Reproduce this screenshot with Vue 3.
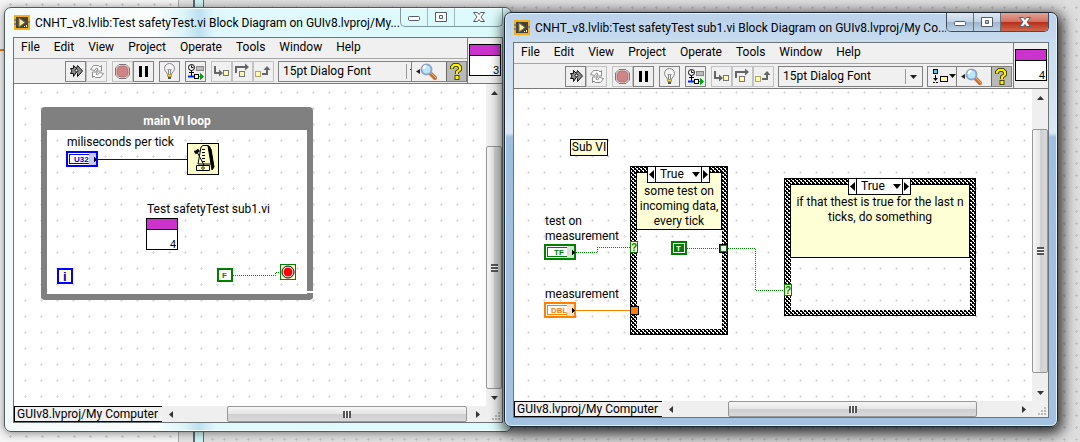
<script setup>
const menus = ['File', 'Edit', 'View', 'Project', 'Operate', 'Tools', 'Window', 'Help']

const groups = [
  [['run', 'Run', true], ['loop', 'Run continuously', false]],
  [['abort', 'Abort', false], ['pause', 'Pause', true]],
  [['bulb', 'Highlight execution', true]],
  [['retain', 'Retain wire values', true]],
  [['into', 'Step into', false], ['over', 'Step over', false], ['out', 'Step out', false]],
]

const windows = [
  {
    id: 'main',
    title: 'CNHT_v8.lvlib:Test safetyTest.vi Block Diagram on GUIv8.lvproj/My...',
    number: 3,
    vbar: [45, 243, 0],
    hbar: [48, 240, 2],
  },
  {
    id: 'sub',
    title: 'CNHT_v8.lvlib:Test safetyTest sub1.vi Block Diagram on GUIv8.lvproj/My Co...',
    number: 4,
    vbar: [23, 244, 11],
    hbar: [49, 249, 38],
  },
]

const tracks = (bar) => `17px ${bar.map((n) => `minmax(0, ${n}fr)`).join(' ')} 17px`
</script>

<template>
  <main class="desktop">
    <svg class="backdrop" aria-hidden="true">
      <defs>
        <pattern id="dots16" width="16" height="16" x="9" y="3" patternUnits="userSpaceOnUse">
          <path d="M0 1h3v1H0zM1 0h1v3H1z" fill="#cfcfcf" />
        </pattern>
        <pattern id="dots12" width="12" height="12" x="7" y="6" patternUnits="userSpaceOnUse">
          <path d="M0 1h3v1H0zM1 0h1v3H1z" fill="#c4c4c4" />
        </pattern>
      </defs>
      <rect width="178" height="100%" fill="#f4f4f4" />
      <rect width="178" height="100%" fill="url(#dots16)" />
      <rect x="178" width="15" height="100%" fill="#e2e2e2" />
      <rect x="178" width="1" height="100%" fill="#a8a8a8" />
      <rect x="193" width="11" height="100%" fill="#cdf3f4" />
      <rect x="193" width="2" height="100%" fill="#5d686c" />
      <rect x="203" width="1" height="100%" fill="#5d686c" />
      <rect x="204" width="100%" height="100%" fill="#dedede" />
      <rect x="204" width="100%" height="100%" fill="url(#dots12)" />
      <rect y="49" width="5" height="2" fill="#f57c00" />
    </svg>

    <section v-for="w in windows" :key="w.id" class="window" :class="w.id">
      <header class="titlebar">
        <svg class="app-icon" width="16" height="15" viewBox="0 0 16 15">
          <rect x="1" y="1" width="14" height="13" fill="#474238" stroke="#f2b118" stroke-width="2" />
          <path d="M0 5h4M0 9h4M11 7h5" stroke="#38579b" />
          <path d="M5 3l6 4.500-6 4.500z" fill="#f9edae" stroke="#8d7b39" />
          <path d="M10 11h1v1h-1zM12 10h1v2h-1z" fill="#fff" />
        </svg>
        <h1>{{ w.title }}</h1>
        <div class="caption">
          <button aria-label="Minimize">
            <svg width="14" height="14" viewBox="0 0 14 14"><rect x="1.500" y="6.500" width="11" height="4" rx="1" fill="#fff" stroke="#555d6b" /></svg>
          </button>
          <button aria-label="Maximize">
            <svg width="14" height="14" viewBox="0 0 14 14"><path d="M1.500 2.500h11v9h-11zM5.500 5.500v3h3v-3z" fill="#fff" fill-rule="evenodd" stroke="#555d6b" /></svg>
          </button>
          <button class="close" aria-label="Close">
            <svg width="14" height="14" viewBox="0 0 14 14"><path d="M1.500 2.500h4L7 4.500l1.500-2h4L9 7l3.500 4.500h-4L7 9.500l-1.500 2h-4L5 7z" fill="#fff" stroke="#555d6b" /></svg>
          </button>
        </div>
      </header>

      <div class="client">
        <div class="head">
          <div class="bars">
            <nav class="menu">
              <button v-for="m in menus" :key="m">{{ m }}</button>
            </nav>
            <div class="toolbar">
              <div v-for="(g, i) in groups" :key="i" class="group">
                <button v-for="[name, label, on] in g" :key="name" :aria-label="label" :class="{ on }">
                  <svg width="21" height="21" viewBox="0 0 21 21">
                    <g v-if="name === 'run'" stroke="#111" fill="#909090">
                      <path d="M5.500 7.500h3v-3l3 3-1.500 2 1.500 1.500-3 4.500v-3h-3l1.500-2.500z" />
                      <path d="M12.500 4.500l5 5.500-5 5.500v-3l-1-1 1.500-2-1.500-2z" />
                    </g>
                    <g v-else-if="name === 'loop'" fill="#fff" stroke="#8c8c8c">
                      <path d="M4.500 8.500l3-4h5l1.500 1.500 1.500-1.500v5.500h-5l1.500-2-1.500-1-2 2.500z" />
                      <path d="M17.500 12.500l-3 4h-5L8 15l-1.500 1.500V11h5L10 13l1.500 1 2-2.500z" />
                    </g>
                    <g v-else-if="name === 'abort'">
                      <path d="M7 3.500h7L17.500 7v7L14 17.500H7L3.500 14V7z" fill="#fff" stroke="#777" />
                      <path d="M7.500 5h6L16 7.500v6L13.500 16h-6L5 13.500v-6z" fill="#cf8585" stroke="#a96a6a" />
                    </g>
                    <path v-else-if="name === 'pause'" d="M6 5h3v11H6zM12 5h3v11h-3z" fill="#000" />
                    <g v-else-if="name === 'bulb'" stroke="#858585">
                      <path d="M8.500 13.500c0-2-3-3-3-6a5 5 0 0 1 10 0c0 3-3 4-3 6z" fill="#f3f3f3" />
                      <path d="M8.500 8l1 1 1-1 1 1 1-1M9.500 9v4M11.500 9v4" fill="none" />
                      <path d="M8.500 13.500h4v2h-4z" fill="#f2d34e" stroke="#b89a35" />
                      <path d="M9 17h3" stroke="#555" stroke-width="2" />
                    </g>
                    <g v-else-if="name === 'retain'" fill="none">
                      <circle cx="6.500" cy="6.500" r="3" fill="#fff" stroke="#000" />
                      <path d="M6.500 4.500v2h2M6.500 9.500v6M4 11.500h5" stroke="#000" />
                      <rect x="11.500" y="5.500" width="7" height="4" fill="#bbb" stroke="#888" />
                      <path d="M3 15.500h6" stroke="#0026ff" stroke-width="2" />
                      <rect x="9.500" y="13.500" width="4" height="4" fill="#fff" stroke="#000" />
                      <path d="M14 15.500h4M15.500 12.500l3 3-3 3z" stroke="#00a614" fill="#00a614" />
                    </g>
                    <g v-else-if="name === 'into'" fill="none">
                      <path d="M4 5v7h5" stroke="#666" stroke-width="2" />
                      <path d="M8 8.500l4 3.500-4 3.500z" fill="#666" />
                      <rect x="12.500" y="9.500" width="5" height="5" fill="#fffcae" stroke="#777" />
                    </g>
                    <g v-else-if="name === 'over'" fill="none">
                      <path d="M4 12V6h9" stroke="#666" stroke-width="2" />
                      <path d="M13 2.500l4 3.500-4 3.500z" fill="#666" />
                      <rect x="7.500" y="10.500" width="5" height="5" fill="#fffcae" stroke="#777" />
                    </g>
                    <g v-else fill="none">
                      <path d="M9 13h5V8" stroke="#666" stroke-width="2" />
                      <path d="M10.500 9L14 5l3.500 4z" fill="#666" />
                      <rect x="2.500" y="10.500" width="5" height="5" fill="#fffcae" stroke="#aaa86b" />
                    </g>
                  </svg>
                </button>
              </div>
              <div class="font">
                <select aria-label="Font"><option>15pt Dialog Font</option></select>
                <svg v-if="w.id === 'sub'" width="17" height="17" viewBox="0 0 17 17"><path d="M.5 1v15" stroke="#999" /><path d="M5 7h7l-3.500 4z" fill="#222" /></svg>
                <svg v-else width="5" height="17" viewBox="0 0 5 17"><path d="M.5 1v15" stroke="#999" /><path d="M4 6h1v1H4z" fill="#222" /></svg>
              </div>
              <div class="tools">
                <button v-if="w.id === 'sub'" class="reorder" aria-label="Reorder">
                  <svg width="28" height="19" viewBox="0 0 28 19">
                    <rect x="5.500" y="2.500" width="4" height="4" fill="#5ed0f3" stroke="#000" />
                    <path d="M7.500 8v3" stroke="#000" />
                    <path d="M5 11h5l-2.500 3z" fill="#000" />
                    <path d="M5 15.500h6" stroke="#000" stroke-dasharray="2 1" />
                    <rect x="12.500" y="9.500" width="7" height="5" fill="#fff9a4" stroke="#000" />
                    <path d="M21 7h7l-3.500 4z" fill="#111" />
                  </svg>
                </button>
                <button class="find" aria-label="Search">
                  <svg width="24" height="19" viewBox="0 0 24 19">
                    <path d="M1 9.500L5 7v5z" fill="#222" />
                    <path d="M15 11l5 5" stroke="#c5703a" stroke-width="4" stroke-linecap="round" />
                    <path d="M16 11l5 5" stroke="#f1b56d" />
                    <circle cx="11.500" cy="7.500" r="5" fill="#b9e7fa" stroke="#91a6c6" stroke-width="2" />
                    <path d="M8.500 7a3 3 0 0 1 3-3" fill="none" stroke="#fff" stroke-width="2" />
                  </svg>
                </button>
                <button class="help" aria-label="Context help">
                  <svg width="18" height="19" viewBox="0 0 18 19">
                    <path d="M5 7V5l2-2h4l2 2v2.500l-3 2.500v2" fill="none" stroke="#4a4a00" stroke-width="4" />
                    <path d="M7.500 13h5v5h-5z" fill="#4a4a00" />
                    <path d="M5 6.500V5l2-2h4l2 2v2.500l-3 2.500v2" fill="none" stroke="#fff200" stroke-width="2" />
                    <path d="M8.500 14h3v3h-3z" fill="#fff200" />
                  </svg>
                </button>
              </div>
            </div>
          </div>
          <div class="corner"><div class="vi-icon">{{ w.number }}</div></div>
        </div>

        <div class="work">
          <div v-if="w.id === 'main'" class="canvas">
            <svg class="sheet" shape-rendering="crispEdges">
              <defs>
                <pattern id="gridMain" width="16" height="16" x="10" y="7" patternUnits="userSpaceOnUse">
                  <path d="M0 1h3v1H0zM1 0h1v3H1z" fill="#dedede" />
                </pattern>
              </defs>
              <rect width="100%" height="100%" fill="url(#gridMain)" />
            </svg>
            <div class="loop"><h2>main VI loop</h2></div>
            <span class="label tick">miliseconds per tick</span>
            <span class="label call">Test safetyTest sub1.vi</span>
            <div class="vi-icon node">4</div>
            <svg class="sheet" shape-rendering="crispEdges">
              <g transform="translate(-14 -84)">
                <path d="M305 290.500h8v2h-8z" fill="#fff" />
                <path d="M98 159.500h89" stroke="#0000e0" />
                <rect x="67" y="152" width="30" height="14" fill="#fff" stroke="#0000ff" stroke-width="2" />
                <rect x="69.500" y="154.500" width="24" height="9" fill="#fff" stroke="#0000ff" />
                <rect x="89" y="153" width="7" height="12" fill="#c8c8fa" />
                <path d="M94 156.500v6l3-3z" fill="#000" />
                <text x="74" y="162" class="glyph blue">U32</text>
                <rect x="187.500" y="143.500" width="31" height="31" fill="#ffffcc" stroke="#000" />
                <g shape-rendering="auto" fill="none" stroke="#000">
                  <path d="M198 164l3-17 2-1.500h5l2 1.500 3 17z" fill="#ffffcc" />
                  <path d="M208 146l3 3 3 18-2 3z" fill="#000" />
                  <path d="M203.500 149v13" stroke-width="3" stroke-dasharray="1 2" />
                  <path d="M196 150l8 15M194 151l4 2" />
                  <path d="M195 153l4-3" stroke-width="3" />
                  <path d="M196.500 165.500h13v5h-13z" fill="#ffffcc" />
                  <path d="M203 166.500l1.500 1.500-1.500 1.500-1.500-1.500z" />
                </g>
                <rect x="58" y="269" width="14" height="14" fill="#ffffcc" stroke="#0000ff" stroke-width="2" />
                <text x="63" y="281" class="glyph index blue">i</text>
                <path d="M233 275.500h42v-3h5" fill="none" stroke="#008000" stroke-dasharray="1 1" />
                <rect x="218" y="269" width="14" height="12" fill="#fff" stroke="#008000" stroke-width="2" />
                <text x="222" y="278" class="glyph green">F</text>
                <rect x="280.500" y="264.500" width="15" height="15" fill="#ffffcc" stroke="#008000" />
                <g shape-rendering="auto">
                  <circle cx="288" cy="272" r="6" fill="#fff" stroke="#000" />
                  <circle cx="288" cy="272" r="4.500" fill="#f00" />
                </g>
              </g>
            </svg>
          </div>

          <div v-else class="canvas">
            <svg class="sheet" shape-rendering="crispEdges">
              <defs>
                <pattern id="gridSub" width="16" height="16" x="13" y="2" patternUnits="userSpaceOnUse">
                  <path d="M0 1h3v1H0zM1 0h1v3H1z" fill="#dedede" />
                </pattern>
                <pattern id="weave" width="4" height="4" patternUnits="userSpaceOnUse">
                  <rect width="4" height="4" fill="#000" />
                  <path d="M0 0h2v1H0zM1 1h1v1H1zM2 2h2v1H2zM3 3h1v1H3z" fill="#fff" />
                </pattern>
              </defs>
              <rect width="100%" height="100%" fill="url(#gridSub)" />
              <g transform="translate(-514 -89)" fill="none">
                <path d="M633.500 169.500h91v162h-91zM787.500 181.500h185v131h-185z" stroke="url(#weave)" stroke-width="6" />
                <path d="M630.500 166.500h97v168h-97zM784.500 178.500h191v137h-191z" stroke="#000" />
              </g>
            </svg>
            <span class="note free">Sub VI</span>
            <p class="note first">some test on incoming data, every tick</p>
            <p class="note second">if that thest is true for the last n ticks, do something</p>
            <div v-for="c in ['one', 'two']" :key="c" class="case" :class="c">
              <button aria-label="Previous case"><svg width="7" height="9" viewBox="0 0 7 9"><path d="M6 0v9L1 4.500z" /></svg></button>
              <select aria-label="Case"><option>True</option></select>
              <svg class="drop" width="8" height="5" viewBox="0 0 8 5"><path d="M0 0h8L4 5z" /></svg>
              <button aria-label="Next case"><svg width="7" height="9" viewBox="0 0 7 9"><path d="M1 0v9l5-4.500z" /></svg></button>
            </div>
            <span class="label bool">test on<br>measurement</span>
            <span class="label dbl">measurement</span>
            <svg class="sheet" shape-rendering="crispEdges">
              <g transform="translate(-514 -89)">
                <path d="M576 252.500h21v-5h33M687 248.500h32M728 248.500h27.500v42H784" fill="none" stroke="#008000" stroke-dasharray="1 1" />
                <path d="M576 310.500h54" stroke="#ff8000" />
                <rect x="545" y="245" width="30" height="14" fill="#fff" stroke="#008000" stroke-width="2" />
                <rect x="547.500" y="247.500" width="24" height="9" fill="#fff" stroke="#008000" />
                <rect x="567" y="246" width="7" height="12" fill="#cfe5cf" />
                <path d="M572 249.500v6l3-3z" />
                <text x="554" y="255" class="glyph green">TF</text>
                <rect x="545" y="303" width="30" height="14" fill="#fff" stroke="#ff8000" stroke-width="2" />
                <rect x="547.500" y="305.500" width="24" height="9" fill="#fff" stroke="#ff8000" />
                <rect x="567" y="304" width="7" height="12" fill="#ffe5cc" />
                <path d="M572 307.500v6l3-3z" />
                <text x="551" y="313" class="glyph orange">DBL</text>
                <rect x="630.500" y="241.500" width="7" height="11" fill="#ffffcc" stroke="#008000" />
                <text x="631" y="251" class="glyph mark">?</text>
                <rect x="784.500" y="284.500" width="7" height="11" fill="#ffffcc" stroke="#008000" />
                <text x="785" y="294" class="glyph mark">?</text>
                <rect x="630.500" y="306.500" width="8" height="8" fill="#ff8000" stroke="#000" />
                <rect x="719.500" y="244.500" width="8" height="8" fill="#fff" stroke="#000" />
                <rect x="720.500" y="245.500" width="6" height="6" fill="#fff" stroke="#008000" />
                <rect x="672" y="242" width="14" height="12" fill="#fff" stroke="#008000" stroke-width="2" />
                <rect x="674" y="244" width="10" height="8" fill="#008000" />
                <text x="676" y="251" class="glyph white">T</text>
              </g>
            </svg>
          </div>

          <div class="scroll vertical" :style="{ gridTemplateRows: tracks(w.vbar) }">
            <button aria-label="Scroll up"><svg width="7" height="4" viewBox="0 0 7 4"><path d="M0 4h7L3.500 0z" fill="#333" /></svg></button>
            <i /><div class="thumb"><b /></div><i />
            <button aria-label="Scroll down"><svg width="7" height="4" viewBox="0 0 7 4"><path d="M0 0h7L3.500 4z" fill="#333" /></svg></button>
          </div>
        </div>

        <footer class="foot">
          <span class="target">GUIv8.lvproj/My Computer</span>
          <div class="scroll horizontal" :style="{ gridTemplateColumns: tracks(w.hbar) }">
            <button aria-label="Scroll left"><svg width="4" height="7" viewBox="0 0 4 7"><path d="M4 0v7L0 3.500z" fill="#333" /></svg></button>
            <i /><div class="thumb"><b /></div><i />
            <button aria-label="Scroll right"><svg width="4" height="7" viewBox="0 0 4 7"><path d="M0 0v7l4-3.500z" fill="#333" /></svg></button>
          </div>
          <svg class="grip" width="16" height="16" viewBox="0 0 16 16"><path d="M12 6h2v2h-2zM9 9h2v2H9zM12 9h2v2h-2zM6 12h2v2H6zM9 12h2v2H9zM12 12h2v2h-2z" fill="#bbb" /></svg>
        </footer>
      </div>
    </section>
  </main>
</template>

<style>
body {
  margin: 0;
  overflow: hidden;
}
</style>

<style scoped>
* {
  box-sizing: border-box;
}
.desktop {
  position: relative;
  height: 100vh;
  overflow: hidden;
  background: #dedede;
  color: #000;
  font-family: Roboto, "Open Sans", "Noto Sans", sans-serif;
  font-size: 12px;
  line-height: 15px;
}
button,
select {
  margin: 0;
  padding: 0;
  border: 0;
  border-radius: 0;
  background: none;
  color: inherit;
  font: inherit;
  appearance: none;
}
svg {
  display: block;
}
.backdrop,
.sheet {
  position: absolute;
  inset: 0;
  width: 100%;
  height: 100%;
  pointer-events: none;
}
.window {
  position: absolute;
  display: flex;
  flex-direction: column;
  padding: 0 8px 8px;
  border: 1px solid #4e5a5e;
  border-radius: 7px;
}
.main {
  left: 4px;
  right: 568px;
  top: 7px;
  bottom: 10px;
  background: linear-gradient(90deg, #f5f8f8 0, #fbfdfd 150px, #dcf5f8 178px, #bfe0f2 194px, #dff8fc 210px, #dcfbfb 100%);
  box-shadow: inset 0 0 0 1px #f6ffff, 0 1px 8px #0007;
}
.sub {
  left: 504px;
  right: 22px;
  top: 12px;
  bottom: 15px;
  border-color: #1b2630;
  background: linear-gradient(#b9d1ea 0, #c9dcef 30px, #dae6f3 120px, #9dbfe0 124px, #a3c2e2 100%);
  box-shadow: inset 0 0 0 1px #e6f1fb, 2px 4px 14px 3px #000c;
}
.titlebar {
  display: flex;
  flex: none;
  align-items: center;
  height: 29px;
  padding-left: 1px;
}
.titlebar h1 {
  flex: 1;
  min-width: 0;
  margin: 0 0 0 5px;
  overflow: hidden;
  font-size: 12px;
  font-weight: 400;
  line-height: 18px;
  white-space: nowrap;
}
.caption {
  display: flex;
  align-self: flex-start;
  flex: none;
  height: 19px;
  border: 1px solid #7d9a9e;
  border-top: 0;
  border-radius: 0 0 5px 5px;
  overflow: hidden;
}
.caption button {
  display: grid;
  place-items: center;
  width: 27px;
  border-right: 1px solid #9fb7ba;
}
.caption .close {
  width: 47px;
  border-right: 0;
}
.sub .caption {
  border-color: #3f4d5e;
}
.sub .caption button {
  border-color: #5f7186;
  background: linear-gradient(#dfe9f4, #c2d2e4 48%, #9fb6cf 52%, #bdd0e4);
}
.sub .caption .close {
  background: linear-gradient(#e3a497, #d2705f 48%, #b8301a 52%, #d0674a);
}
.client {
  display: flex;
  flex: 1;
  flex-direction: column;
  min-height: 0;
  border: 1px solid #6c7678;
  background: #f0f0f0;
}
.head {
  display: flex;
  flex: none;
  height: 46px;
  border-bottom: 1px solid #7a7a7a;
}
.bars {
  flex: 1;
  min-width: 0;
}
.menu {
  display: flex;
  gap: 14px;
  height: 21px;
  padding: 0 0 2px 7px;
  border-bottom: 1px solid #a5a5a5;
}
.toolbar {
  display: flex;
  align-items: center;
  height: 24px;
  padding-left: 51px;
}
.group {
  display: flex;
  flex: none;
  margin-right: 5px;
}
.group button {
  width: 21px;
  height: 21px;
  border: 1px solid #c2c2c2;
}
.group button.on {
  border-color: #808080;
}
.group svg {
  margin: -1px;
}
.font {
  display: flex;
  flex: 1;
  align-items: center;
  min-width: 0;
  height: 21px;
  margin-left: -1px;
  border: 1px solid #808080;
}
.font select {
  flex: 1;
  min-width: 0;
  padding-left: 4px;
}
.tools {
  display: flex;
  flex: none;
  height: 21px;
  border: 1px solid #808080;
  border-left-width: 0;
}
.sub .tools {
  margin-left: 4px;
  margin-right: 1px;
  border-left-width: 1px;
}
.reorder {
  width: 29px;
  border-right: 1px solid #808080;
}
.find {
  width: 34px;
  padding-left: 3px;
}
.help {
  width: 20px;
  border-left: 1px solid #666;
  background: #b9b9b9;
}
.corner {
  flex: none;
  width: 35px;
  padding: 6px 1px 0;
  border-left: 1px solid #7a7a7a;
}
.vi-icon {
  display: flex;
  align-items: flex-end;
  justify-content: flex-end;
  width: 32px;
  height: 32px;
  padding-right: 1px;
  border: 1px solid #000;
  background: linear-gradient(#cc33cc 10px, #000 10px, #000 11px, #fff 11px);
  font-family: "Liberation Sans", Arial, sans-serif;
  font-size: 11px;
  line-height: 10px;
}
.work {
  display: flex;
  flex: 1;
  min-height: 0;
}
.canvas {
  position: relative;
  flex: 1;
  min-width: 0;
  overflow: hidden;
  background: #fff;
}
.loop {
  position: absolute;
  left: 27px;
  top: 23px;
  width: 272px;
  height: 193px;
  border: 6px solid #808080;
  border-top-width: 0;
  border-radius: 4px;
}
.loop h2 {
  height: 23px;
  margin: 0;
  background: #808080;
  color: #fff;
  font-size: 12px;
  font-weight: 700;
  line-height: 29px;
  text-align: center;
}
.label,
.note,
.case,
.node {
  position: absolute;
}
.label {
  white-space: nowrap;
}
.tick {
  left: 53px;
  top: 51px;
}
.call {
  left: 133px;
  top: 118px;
}
.node {
  left: 132px;
  top: 134px;
}
.note {
  margin: 0;
  border: 1px solid #000;
  background: #ffffd5;
  text-align: center;
}
.free {
  left: 56px;
  top: 50px;
  width: 38px;
  height: 17px;
}
.first {
  left: 122px;
  top: 83px;
  width: 86px;
  height: 58px;
  padding-top: 11px;
}
.second {
  left: 276px;
  top: 95px;
  width: 180px;
  height: 74px;
  padding-top: 10px;
}
.case {
  display: flex;
  width: 63px;
  height: 17px;
  border: 1px solid #000;
  background: #fff;
}
.case button {
  flex: none;
  width: 7px;
}
.case select {
  flex: 1;
  min-width: 0;
  padding-left: 4px;
  border: solid #000;
  border-width: 0 1px;
}
.drop {
  position: absolute;
  right: 9px;
  top: 5px;
}
.one {
  left: 133px;
  top: 77px;
}
.two {
  left: 334px;
  top: 89px;
}
.bool {
  left: 31px;
  top: 125px;
}
.dbl {
  left: 31px;
  top: 198px;
}
.glyph {
  font-family: "Liberation Sans", Arial, sans-serif;
  font-size: 8px;
  font-weight: 700;
}
.index {
  font-size: 13px;
}
.mark {
  fill: #008000;
  font-size: 10px;
}
.blue {
  fill: #0000e0;
}
.green {
  fill: #008000;
}
.orange {
  fill: #ff8000;
}
.white {
  fill: #fff;
}
.scroll {
  display: grid;
  background: #efefef;
}
.scroll button {
  display: grid;
  place-items: center;
}
.vertical {
  flex: none;
  width: 16px;
}
.horizontal {
  flex: 1;
  min-width: 0;
}
.thumb {
  display: grid;
  place-items: center;
  border: 1px solid #969696;
  border-radius: 2px;
  background: linear-gradient(90deg, #f6f6f6, #e6e6e6 48%, #cfcfd1 52%, #dadadc);
}
.horizontal .thumb {
  background: linear-gradient(#f6f6f6, #e6e6e6 48%, #cfcfd1 52%, #dadadc);
}
.thumb b {
  width: 7px;
  height: 8px;
  background: repeating-linear-gradient(#555 0 2px, #fff 2px 3px);
}
.horizontal .thumb b {
  width: 8px;
  height: 7px;
  background: repeating-linear-gradient(90deg, #555 0 2px, #fff 2px 3px);
}
.foot {
  display: flex;
  flex: none;
  height: 16px;
}
.target {
  flex: none;
  width: 148px;
  padding-left: 2px;
  border: 1px solid #000;
  border-right: 0;
  line-height: 14px;
  white-space: nowrap;
}
.grip {
  flex: none;
}
</style>
